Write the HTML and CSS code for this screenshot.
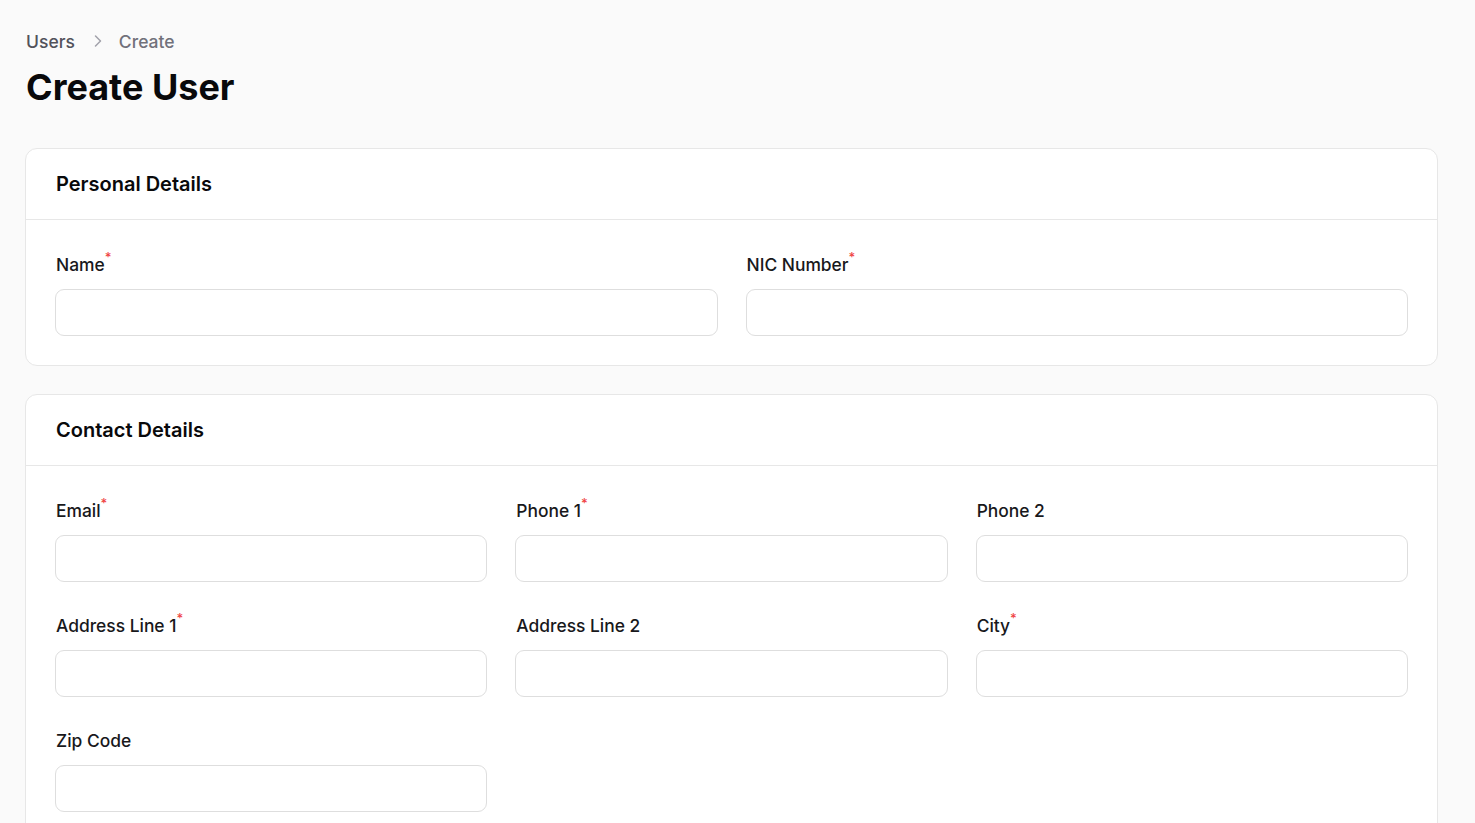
FILE: index.html
```html
<!DOCTYPE html>
<html lang="en">
<head>
<meta charset="utf-8">
<title>Create User</title>
<link rel="stylesheet" href="styles.css">
</head>
<body>
<main class="page">
  <nav class="breadcrumb">
    <span class="crumb">Users</span>
    <svg class="chev" width="16" height="16" viewBox="0 0 16 16" fill="none"><path d="M5.5 3 10.5 8 5.5 13" stroke="#a1a1aa" stroke-width="1.5" stroke-linecap="round" stroke-linejoin="round"/></svg>
    <span class="crumb current">Create</span>
  </nav>
  <h1 class="title">Create User</h1>

  <section class="card first">
    <header class="card-head"><h2>Personal Details</h2></header>
    <div class="card-body grid two">
      <div class="field">
        <label class="label">Name<sup class="req">*</sup></label>
        <input class="input" type="text">
      </div>
      <div class="field">
        <label class="label">NIC Number<sup class="req">*</sup></label>
        <input class="input" type="text">
      </div>
    </div>
  </section>

  <section class="card">
    <header class="card-head"><h2>Contact Details</h2></header>
    <div class="card-body grid three">
      <div class="field">
        <label class="label">Email<sup class="req">*</sup></label>
        <input class="input" type="text">
      </div>
      <div class="field">
        <label class="label">Phone 1<sup class="req">*</sup></label>
        <input class="input" type="text">
      </div>
      <div class="field">
        <label class="label">Phone 2</label>
        <input class="input" type="text">
      </div>
      <div class="field">
        <label class="label">Address Line 1<sup class="req">*</sup></label>
        <input class="input" type="text">
      </div>
      <div class="field">
        <label class="label">Address Line 2</label>
        <input class="input" type="text">
      </div>
      <div class="field">
        <label class="label">City<sup class="req">*</sup></label>
        <input class="input" type="text">
      </div>
      <div class="field">
        <label class="label">Zip Code</label>
        <input class="input" type="text">
      </div>
    </div>
  </section>
</main>
</body>
</html>
```

FILE: styles.css
```css
* { box-sizing: border-box; }
html, body { margin: 0; padding: 0; }
body {
  background: #fafafa;
  font-family: Inter, "Noto Sans", "Liberation Sans", sans-serif;
  color: #09090b;
}
.page {
  padding: 28px 37px 40px 25px;
}
.breadcrumb {
  display: flex;
  align-items: center;
  height: 26px;
  padding-left: 1px;
  font-size: 17.5px;
  font-weight: 500;
}
.crumb { color: #52525b; }
.crumb.current { color: #71717a; }
.chev { margin: 0 13px 0 15px; }
.title {
  margin: 13px 0 0 0;
  font-size: 36px;
  line-height: 40px;
  font-weight: 700;
  letter-spacing: 0;
  padding-left: 1px;
}
.card {
  background: #fff;
  border: 1px solid #e7e7e7;
  border-radius: 12px;
  margin-top: 28px;
}
.card.first { margin-top: 41px; }
.card-head {
  padding: 21px 30px;
  border-bottom: 1px solid #e7e7e7;
}
.card-head h2 {
  margin: 0;
  font-size: 20px;
  line-height: 28px;
  font-weight: 600;
}
.card-body {
  padding: 33px 29px 29px 29px;
}
.grid {
  display: grid;
  column-gap: 28px;
  row-gap: 32px;
}
.grid.two { grid-template-columns: 1fr 1fr; }
.grid.three { grid-template-columns: 1fr 1fr 1fr; }
.field {
  display: flex;
  flex-direction: column;
  gap: 12px;
}
.label {
  font-size: 17.4px;
  line-height: 24px;
  font-weight: 500;
  color: #18181b;
  padding-left: 1px;
}
.req {
  color: #ef4444;
  font-size: 13px;
  line-height: 0;
  vertical-align: 0;
  position: relative;
  top: -9px;
  margin-left: 0;
}
.input {
  display: block;
  width: 100%;
  height: 47px;
  border: 1px solid #dedede;
  border-radius: 9px;
  background: #fff;
  font: inherit;
  padding: 0 12px;
  outline: none;
}
```
